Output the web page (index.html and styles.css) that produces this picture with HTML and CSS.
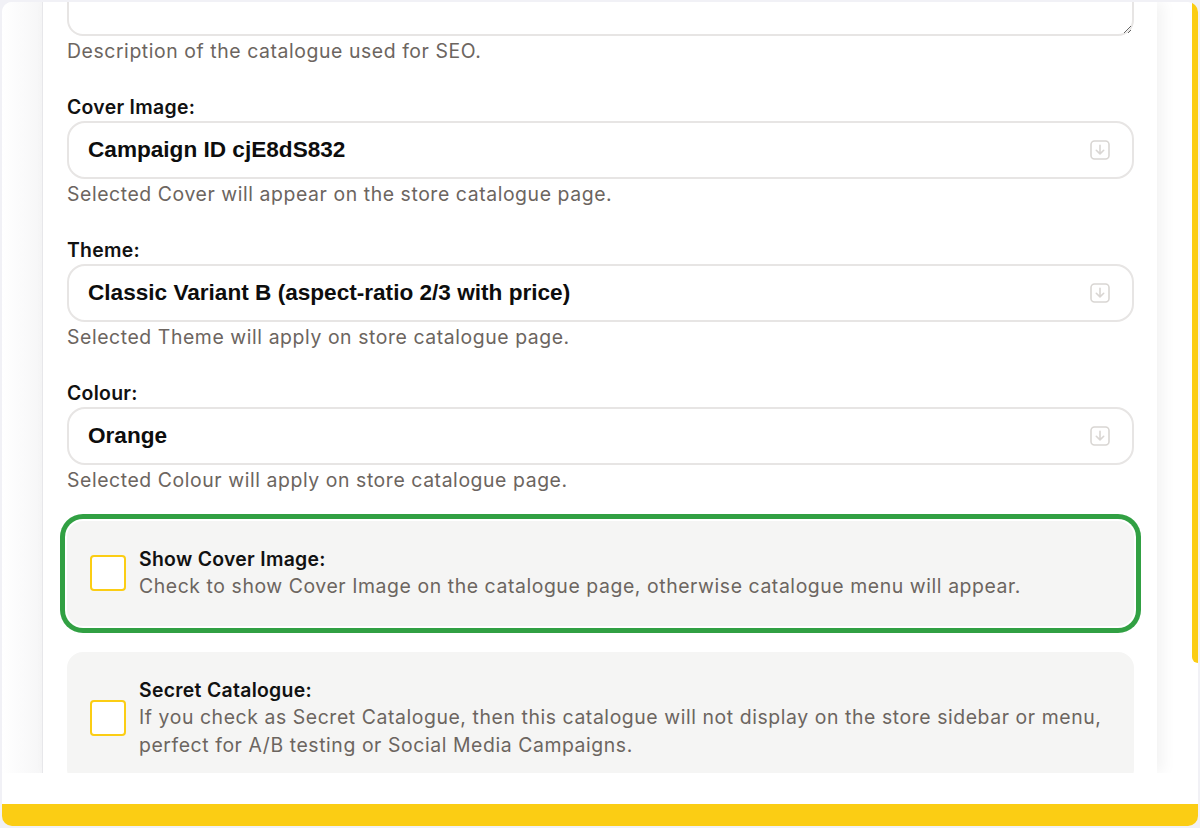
FILE: index.html
```html
<!DOCTYPE html>
<html>
<head>
<meta charset="utf-8">
<link rel="stylesheet" href="styles.css">
</head>
<body>
<div class="frame">
  <div class="viewport">
    <div class="sheet">
      <div class="content">
        <div class="field first">
          <textarea class="textarea"></textarea>
          <div class="help">Description of the catalogue used for SEO.</div>
        </div>
        <div class="field">
          <div class="label">Cover Image:</div>
          <div class="select"><span class="value">Campaign ID cjE8dS832</span>
            <svg class="icon" viewBox="0 0 20 20" width="20" height="20"><rect x="1" y="1" width="18" height="18" rx="3.5" fill="none" stroke="#d9d6d3" stroke-width="1.6"/><path d="M10 5.2v8.6M6.3 10.3l3.7 3.6 3.7-3.6" fill="none" stroke="#d9d6d3" stroke-width="1.6" stroke-linecap="round" stroke-linejoin="round"/></svg>
          </div>
          <div class="help">Selected Cover will appear on the store catalogue page.</div>
        </div>
        <div class="field">
          <div class="label">Theme:</div>
          <div class="select"><span class="value">Classic Variant B (aspect-ratio 2/3 with price)</span>
            <svg class="icon" viewBox="0 0 20 20" width="20" height="20"><rect x="1" y="1" width="18" height="18" rx="3.5" fill="none" stroke="#d9d6d3" stroke-width="1.6"/><path d="M10 5.2v8.6M6.3 10.3l3.7 3.6 3.7-3.6" fill="none" stroke="#d9d6d3" stroke-width="1.6" stroke-linecap="round" stroke-linejoin="round"/></svg>
          </div>
          <div class="help">Selected Theme will apply on store catalogue page.</div>
        </div>
        <div class="field field-last">
          <div class="label">Colour:</div>
          <div class="select"><span class="value">Orange</span>
            <svg class="icon" viewBox="0 0 20 20" width="20" height="20"><rect x="1" y="1" width="18" height="18" rx="3.5" fill="none" stroke="#d9d6d3" stroke-width="1.6"/><path d="M10 5.2v8.6M6.3 10.3l3.7 3.6 3.7-3.6" fill="none" stroke="#d9d6d3" stroke-width="1.6" stroke-linecap="round" stroke-linejoin="round"/></svg>
          </div>
          <div class="help">Selected Colour will apply on store catalogue page.</div>
        </div>
        <div class="option focused">
          <span class="check"></span>
          <div class="option-text">
            <div class="option-title">Show Cover Image:</div>
            <div class="option-desc">Check to show Cover Image on the catalogue page, otherwise catalogue menu will appear.</div>
          </div>
        </div>
        <div class="option">
          <span class="check"></span>
          <div class="option-text">
            <div class="option-title">Secret Catalogue:</div>
            <div class="option-desc">If you check as Secret Catalogue, then this catalogue will not display on the store sidebar or menu, perfect for A/B testing or Social Media Campaigns.</div>
          </div>
        </div>
      </div>
    </div>
  </div>
  <div class="thumb"></div>
</div>
</body>
</html>
```

FILE: styles.css
```css
html, body {
  margin: 0;
  padding: 0;
  background: #f1f1f6;
}
body {
  padding: 2px;
  font-family: "Inter", "Noto Sans", sans-serif;
}
.frame {
  position: relative;
  height: 802px;
  background: #ffffff;
  border-radius: 10px;
  border-bottom: 22px solid #fbcd14;
  overflow: hidden;
}
.viewport {
  height: 771px;
  overflow: hidden;
  padding: 0 38px 0 40px;
  background: linear-gradient(to right, #ffffff 0, #f6f6f7 40px, transparent 40px);
}
.sheet {
  width: 1114px;
  height: 771px;
  overflow: hidden;
  background: #ffffff;
  border-left: 1px solid #e7e7ea;
  box-shadow: 6px 0 14px rgba(0, 0, 0, 0.05);
}
.content {
  margin-top: -68px;
  padding: 0 23px 0 24px;
}
.field {
  margin-bottom: 30px;
}
.field-last {
  margin-bottom: 28px;
}
.textarea {
  display: block;
  box-sizing: border-box;
  width: 100%;
  height: 102px;
  margin: 0;
  border: 2px solid #e7e5e4;
  border-radius: 16px;
  background: #fff;
  resize: vertical;
  font: inherit;
}
.help,
.label,
.option-title,
.option-desc {
  font-size: 19.4px;
  letter-spacing: 0.58px;
}
.help {
  margin-top: 2px;
  line-height: 26px;
  color: #6c6560;
}
.label {
  line-height: 26px;
  font-weight: 600;
  letter-spacing: 0.3px;
  color: #111111;
  margin-bottom: 1px;
}
.select {
  box-sizing: border-box;
  height: 58px;
  display: flex;
  align-items: center;
  justify-content: space-between;
  border: 2px solid #e7e5e4;
  border-radius: 18px;
  padding: 0 22px 0 19px;
  background: #fff;
}
.value {
  font-family: "Liberation Sans", Arial, sans-serif;
  font-weight: 700;
  font-size: 22.6px;
  color: #0d0d0d;
}
.icon {
  display: block;
  flex: none;
}
.option {
  display: flex;
  align-items: center;
  gap: 13px;
  background: #f5f5f4;
  border-radius: 16px;
  padding: 25px 23px;
}
.option.focused {
  box-shadow: 0 0 0 2px #ffffff, 0 0 0 7px #31a043;
}
.option + .option {
  margin-top: 26px;
}
.check {
  flex: none;
  box-sizing: border-box;
  width: 36px;
  height: 36px;
  background: #ffffff;
  border: 2px solid #fbcd14;
  border-radius: 4px;
}
.option-title {
  line-height: 26px;
  font-weight: 600;
  letter-spacing: 0.3px;
  color: #111111;
}
.option-desc {
  line-height: 28.5px;
  color: #6c6560;
}
.thumb {
  position: absolute;
  top: 0;
  right: 0;
  width: 6px;
  height: 661px;
  background: #fbcd14;
  border-bottom-left-radius: 6px;
}
```
